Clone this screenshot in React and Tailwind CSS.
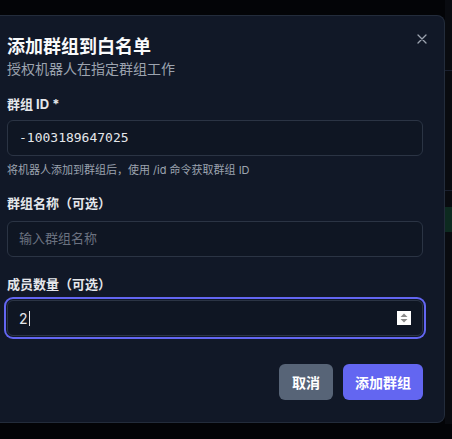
import React from "react";

const cjk = { fontFamily: '"Inter", "Noto Sans CJK SC", sans-serif' };

export default function App() {
  return (
    <div
      className="w-[452px] h-[439px] bg-[#030407] pt-[15px] overflow-hidden"
      style={cjk}
    >
      <div className="flex">
        <div className="relative w-[445px] h-[408px] shrink-0 bg-[#111827] border-y border-r border-[#232c3b] rounded-r-lg pl-[7px] pr-[21px] flex flex-col">
          <button className="absolute top-[17px] right-[16px] w-[12px] h-[12px] flex items-center justify-center text-[#9ca3af]">
            <svg width="10" height="10" viewBox="0 0 10 10" fill="none">
              <path d="M1 1L9 9M9 1L1 9" stroke="currentColor" strokeWidth="1.3" strokeLinecap="round" />
            </svg>
          </button>
          <h2 className="mt-[19px] text-[18px] leading-[24px] font-bold text-[#f9fafb]">
            添加群组到白名单
          </h2>
          <p className="text-[14px] leading-[20px] text-[#9ca3af]">授权机器人在指定群组工作</p>

          <label className="mt-[15px] text-[13px] leading-[20px] font-bold text-[#e5e7eb]">群组 ID *</label>
          <div className="mt-[6px] h-[36px] rounded-md border border-[#2b3444] bg-[#0f1623] px-[11px] flex items-center">
            <span
              className="text-[13px] font-medium text-[#e5e7eb]"
              style={{ fontFamily: '"DejaVu Sans Mono", monospace' }}
            >
              -1003189647025
            </span>
          </div>
          <p className="mt-[6px] text-[11px] leading-[16px] text-[#9ca3af]">
            将机器人添加到群组后，使用 /id 命令获取群组 ID
          </p>

          <label className="mt-[15px] text-[13px] leading-[20px] font-bold text-[#e5e7eb]">群组名称（可选）</label>
          <div className="mt-[8px] h-[36px] rounded-md border border-[#2b3444] bg-[#0f1623] px-[11px] flex items-center">
            <span className="text-[13px] text-[#6b7280]">输入群组名称</span>
          </div>

          <label className="mt-[17px] text-[13px] leading-[20px] font-bold text-[#e5e7eb]">成员数量（可选）</label>
          <div className="relative mt-[6px] h-[36px] rounded-md border border-[#2b3444] bg-[#0f1623] px-[11px] flex items-center ring-2 ring-[#6366f1] ring-offset-1 ring-offset-[#111827]">
            <span className="text-[14px] text-[#e5e7eb]">2</span>
            <span className="ml-[1px] w-[1px] h-[15px] bg-[#e5e7eb]" />
            <div className="absolute right-[11px] top-[10px] w-[14px] h-[14px] bg-white flex items-center justify-center">
              <svg width="8" height="10" viewBox="0 0 8 10">
                <path d="M4 0.5L7.5 4H0.5Z" fill="#8a8a8a" />
                <path d="M4 9.5L7.5 6H0.5Z" fill="#8a8a8a" />
              </svg>
            </div>
          </div>

          <div className="mt-[28px] flex justify-end gap-[10px]">
            <button className="w-[54px] h-[36px] rounded-md bg-[#576477] text-[14px] font-bold text-white">
              取消
            </button>
            <button className="w-[80px] h-[36px] rounded-md bg-[#6366f1] text-[14px] font-bold text-white">
              添加群组
            </button>
          </div>
        </div>
        <div className="w-[7px] h-[424px] -mt-[15px] bg-[#090b10] flex flex-col">
          <div className="h-[71px] border-b border-[#1a2030]" />
          <div className="h-[120px] border-b border-[#1a2030]" />
          <div className="mt-[16px] h-[25px] bg-[#0d2a20]" />
        </div>
      </div>
    </div>
  );
}
